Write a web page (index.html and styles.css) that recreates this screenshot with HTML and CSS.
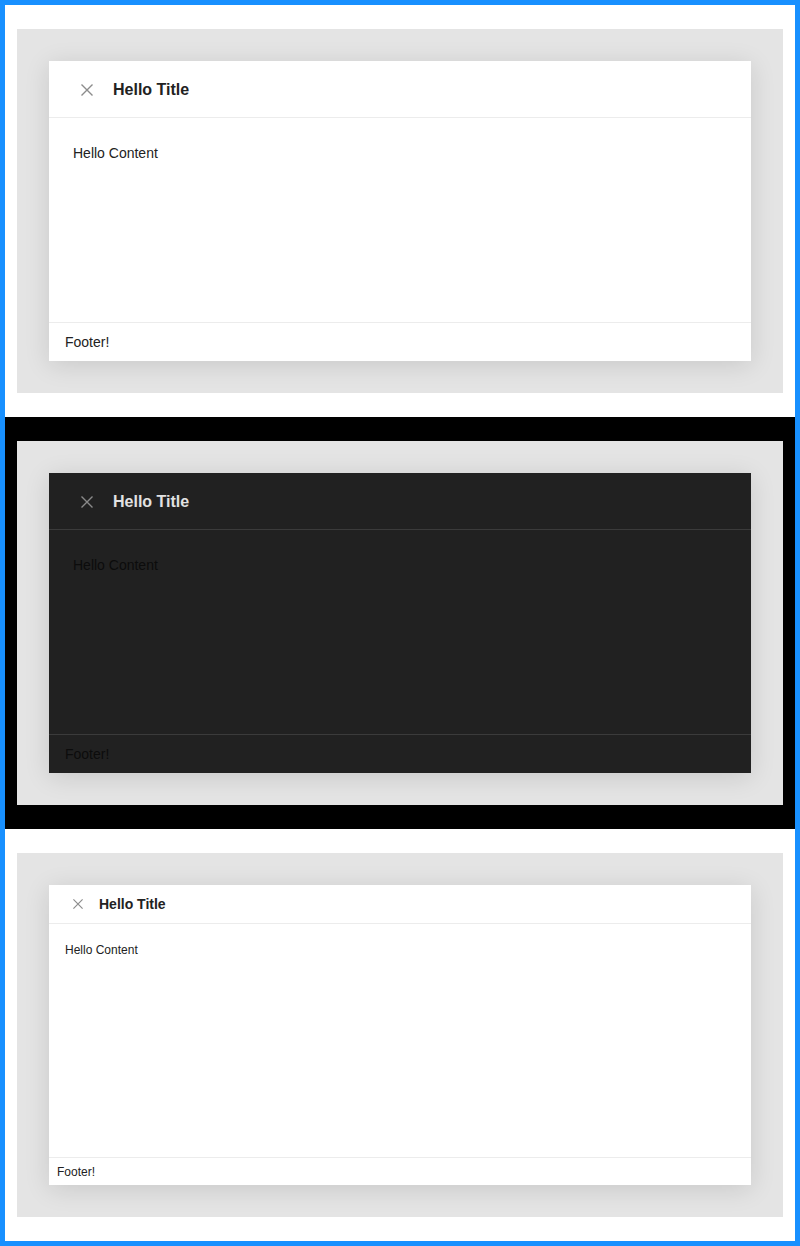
FILE: index.html
```html
<!DOCTYPE html>
<html>
<head>
<meta charset="utf-8">
<link rel="stylesheet" href="styles.css">
</head>
<body>
<div class="frame">
  <section class="demo light">
    <div class="stage">
      <div class="dialog">
        <div class="dlg-header">
          <button class="close" aria-label="close"><svg viewBox="0 0 12 12" width="12" height="12"><path d="M0.5 0.5 L11.5 11.5 M11.5 0.5 L0.5 11.5" /></svg></button>
          <div class="title">Hello Title</div>
        </div>
        <div class="dlg-content">Hello Content</div>
        <div class="dlg-footer">Footer!</div>
      </div>
    </div>
  </section>
  <section class="demo dark">
    <div class="stage">
      <div class="dialog">
        <div class="dlg-header">
          <button class="close" aria-label="close"><svg viewBox="0 0 12 12" width="12" height="12"><path d="M0.5 0.5 L11.5 11.5 M11.5 0.5 L0.5 11.5" /></svg></button>
          <div class="title">Hello Title</div>
        </div>
        <div class="dlg-content">Hello Content</div>
        <div class="dlg-footer">Footer!</div>
      </div>
    </div>
  </section>
  <section class="demo light compact">
    <div class="stage">
      <div class="dialog">
        <div class="dlg-header">
          <button class="close" aria-label="close"><svg viewBox="0 0 12 12" width="10" height="10"><path d="M0.5 0.5 L11.5 11.5 M11.5 0.5 L0.5 11.5" /></svg></button>
          <div class="title">Hello Title</div>
        </div>
        <div class="dlg-content">Hello Content</div>
        <div class="dlg-footer">Footer!</div>
      </div>
    </div>
  </section>
</div>
</body>
</html>
```
FILE: styles.css
```css
* { box-sizing: border-box; }
html, body { margin: 0; padding: 0; }
body {
  font-family: "Liberation Sans", Arial, sans-serif;
  width: 800px;
  height: 1246px;
  background: #fff;
}
.frame {
  border: 5px solid #1890ff;
  height: 1246px;
  display: flex;
  flex-direction: column;
}
.demo {
  height: 412px;
  padding: 24px 12px;
}
.demo.dark { background: #000; }
.demo.light { background: #fff; }
.stage {
  height: 364px;
  background: #e4e4e4;
  padding: 32px;
}
.dialog {
  height: 300px;
  display: flex;
  flex-direction: column;
  background: #fff;
  box-shadow: 0 4px 24px rgba(0,0,0,0.12);
}
.dlg-header {
  height: 57px;
  display: flex;
  align-items: center;
  padding: 1px 24px 0;
  border-bottom: 1px solid #ececec;
  gap: 12px;
}
.close {
  width: 28px;
  height: 28px;
  padding: 0;
  margin: 0;
  border: none;
  background: transparent;
  display: flex;
  align-items: center;
  justify-content: center;
}
.close svg path {
  stroke: #8c8c8c;
  stroke-width: 1.4;
  fill: none;
}
.title {
  font-size: 16px;
  font-weight: bold;
  color: #222;
}
.dlg-content {
  flex: 1;
  padding: 25px 24px;
  font-size: 14px;
  line-height: 20px;
  color: #222;
}
.dlg-footer {
  height: 39px;
  border-top: 1px solid #ececec;
  padding: 0 16px;
  display: flex;
  align-items: center;
  font-size: 14px;
  color: #222;
}

.dark .dialog { background: #212121; }
.dark .dlg-header { border-bottom-color: #3b3b3b; }
.dark .title { color: #e2e2e2; }
.dark .dlg-content { color: #0c0c0c; }
.dark .dlg-footer { border-top-color: #3b3b3b; color: #0c0c0c; }
.dark .close svg path { stroke: #8a8a8a; }

.compact .dlg-header {
  height: 39px;
  padding: 0 16px;
  gap: 8px;
}
.compact .close { width: 26px; height: 26px; }
.compact .title { font-size: 14px; }
.compact .dlg-content {
  padding: 18px 16px 16px;
  font-size: 12px;
  line-height: 16px;
}
.compact .dlg-footer {
  height: 28px;
  padding: 0 8px;
  font-size: 12px;
}
```
